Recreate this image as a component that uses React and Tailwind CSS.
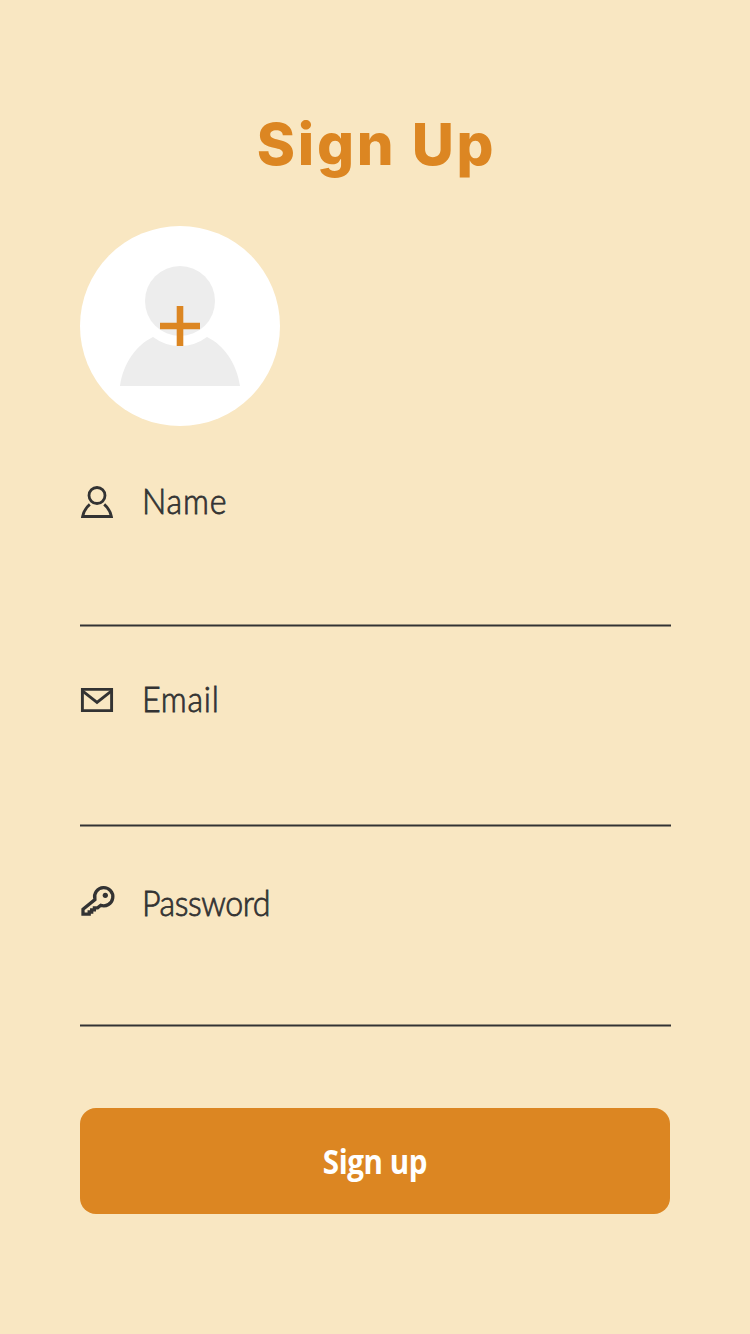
function PersonIcon() {
  return (
    <svg viewBox="0 0 36 36" className="h-9 w-9" fill="none" stroke="#333333" strokeWidth="2.8">
      <circle cx="17" cy="11.500" r="8" />
      <path d="M9.800 20.400C6.200 23.500 3.500 27.600 2.600 32.500h28.800c-.9-4.900-3.600-9-7.200-12.100" />
    </svg>
  );
}

function MailIcon() {
  return (
    <svg viewBox="0 0 36 36" className="h-9 w-9" fill="none" stroke="#333333" strokeWidth="2.9">
      <path d="M2.400 7.400h29.200v21.200H2.400z" />
      <path d="M2.400 8.800 17 20.300 31.600 8.800" />
    </svg>
  );
}

function KeyIcon() {
  return (
    <svg viewBox="0 0 36 36" className="h-9 w-9" fill="none" stroke="#333333" strokeWidth="3.300">
      <path d="M14.900 15.900A9.100 9.100 0 1 1 20.700 22.300L17.600 24.800H14.400V26.800H11.700V29H9.200V31.200H3V26.200L14.900 16.600Z" />
      <circle cx="25.300" cy="12.300" r="2.600" fill="#333333" stroke="none" />
    </svg>
  );
}

function Field({ icon, label, labelClass, iconClass }) {
  return (
    <div className="flex h-[200px] flex-col justify-between">
      <div className="flex items-start">
        <span className={iconClass}>{icon}</span>
        <span className={labelClass}>{label}</span>
      </div>
      <div className="-mb-px h-[3px] w-[591px] border-y border-[#333333]/50 bg-[#333333] bg-clip-padding" />
    </div>
  );
}

export default function App() {
  const label = "ml-[26px] origin-left scale-x-[0.92] whitespace-nowrap font-[Lato,sans-serif] text-[35px] font-light leading-[44px] text-[#333333] [-webkit-text-stroke:0.8px_#333333]";
  return (
    <main className="flex h-[1334px] w-[750px] flex-col bg-[#f9e7c2] px-20">
      <h1 className="mt-[109px] h-[70px] whitespace-nowrap pl-[3px] text-center font-[Inter,sans-serif] text-[58px] font-extrabold leading-[70px] tracking-[2.7px] text-[#dc8622]">
        Sign Up
      </h1>
      <div className="mt-[47px] h-[200px] w-[200px] rounded-full bg-white">
        <svg viewBox="0 0 200 200" className="h-full w-full">
          <circle cx="100" cy="75" r="35" fill="#ededed" />
          <path d="M40 160C43 138 56 119 73 111Q85 120 100 120T127 111C144 119 157 138 160 160Z" fill="#ededed" />
          <path d="M80 100h40M100 80v40" stroke="#dc8622" strokeWidth="6.600" />
        </svg>
      </div>
      <section className="flex flex-col">
        <Field icon={<PersonIcon />} label="Name" iconClass="mt-[58px]" labelClass={label + " mt-[52px] tracking-[0.9px]"} />
        <Field icon={<MailIcon />} label="Email" iconClass="mt-[56px]" labelClass={label + " mt-[50px] tracking-[0.8px]"} />
        <Field icon={<KeyIcon />} label="Password" iconClass="mt-[57px]" labelClass={label + " mt-[54px] tracking-[-0.500px]"} />
      </section>
      <button className="mt-[82px] flex h-[106px] w-[590px] items-center justify-center rounded-2xl bg-[#dc8622] font-['Open_Sans',sans-serif] text-[34px] font-bold text-white">
        <span className="scale-x-[0.87] whitespace-nowrap tracking-[-0.500px]">Sign up</span>
      </button>
    </main>
  );
}
